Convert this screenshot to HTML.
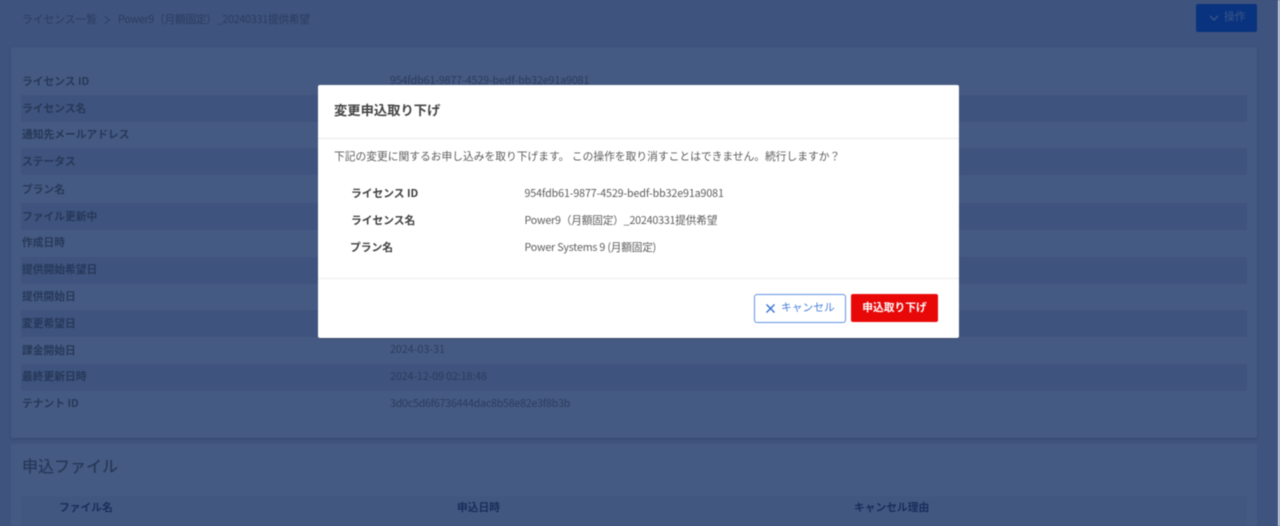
<!DOCTYPE html>
<html lang="ja"><head><meta charset="utf-8"><title>変更申込取り下げ</title>
<style>
*{box-sizing:border-box}
html,body{margin:0;padding:0;width:1280px;height:526px;overflow:hidden}
body{background:#3e537d;font-family:"Noto Sans CJK JP","Liberation Sans",sans-serif;position:relative}
#w{position:absolute;left:0;top:0;width:1280px;height:526px;filter:blur(.4px);background:#3e537d}
.a{position:absolute;white-space:nowrap;line-height:16px}
.card{position:absolute;background:#455a82;left:11px;width:1246px;border-radius:2px}
.st{position:absolute;left:21px;width:1226px;height:27px;background:#3e537d}
.l{position:absolute;left:22px;font-size:10.75px;font-weight:700;color:#263859;white-space:nowrap;line-height:16px}
.v{position:absolute;left:390px;font-size:10.7px;color:#2a3c60;white-space:nowrap;line-height:16px}
.th{position:absolute;top:500px;font-size:10.75px;font-weight:700;color:#172e5a;line-height:16px;white-space:nowrap}
.modal{position:absolute;left:318px;top:85px;width:641px;height:253px;background:#fff;border-radius:2px;box-shadow:0 1px 1px rgba(0,0,0,.2)}
.ml{position:absolute;font-size:10.75px;font-weight:700;color:#3d3d3d;white-space:nowrap;line-height:16px}
.mv{position:absolute;left:206.5px;font-size:10.7px;color:#5c5c5c;white-space:nowrap;line-height:16px}
</style></head><body><div id="w">
<div class="a" style="left:22px;top:12px;font-size:10.75px;color:#2a3c60">ライセンス一覧</div>
<svg class="a" style="left:103px;top:15px" width="8" height="10" viewBox="0 0 8 10"><path d="M1.5 1l5 4-5 4" fill="none" stroke="#2c4270" stroke-width="1"/></svg>
<div class="a" style="left:118px;top:12px;font-size:10.7px;letter-spacing:-.24px;color:#2a3c60">Power9（月額固定）_20240331提供希望</div>
<div class="a" style="left:1196px;top:4px;width:61px;height:28px;background:#0a337f;border-radius:2px"></div>
<svg class="a" style="left:1209px;top:14px" width="10" height="8" viewBox="0 0 10 8"><path d="M1 2l4 4 4-4" fill="none" stroke="#3a5688" stroke-width="1.3"/></svg>
<div class="a" style="left:1224px;top:9px;font-size:10.75px;color:#3a5688">操作</div>
<div class="card" style="top:47px;height:391px;box-shadow:0 1px 2px #34486f"></div>
<div class="card" style="top:444px;height:82px"></div>
<div class="st" style="top:95px"></div><div class="st" style="top:148px"></div><div class="st" style="top:203px"></div><div class="st" style="top:257px"></div><div class="st" style="top:310px"></div><div class="st" style="top:364px"></div>
<div class="l" style="top:74px">ライセンス ID</div>
<div class="l" style="top:101px">ライセンス名</div>
<div class="l" style="top:127px">通知先メールアドレス</div>
<div class="l" style="top:154px">ステータス</div>
<div class="l" style="top:182px">プラン名</div>
<div class="l" style="top:209px">ファイル更新中</div>
<div class="l" style="top:235px">作成日時</div>
<div class="l" style="top:262px">提供開始希望日</div>
<div class="l" style="top:289px">提供開始日</div>
<div class="l" style="top:316px">変更希望日</div>
<div class="l" style="top:343px">課金開始日</div>
<div class="l" style="top:369px">最終更新日時</div>
<div class="l" style="top:396px">テナント ID</div>
<div class="v" style="top:73px;letter-spacing:-.12px">954fdb61-9877-4529-bedf-bb32e91a9081</div>
<div class="v" style="top:342px">2024-03-31</div>
<div class="v" style="top:369px;letter-spacing:-.1px">2024-12-09 02:18:48</div>
<div class="v" style="top:396px;letter-spacing:-.25px">3d0c5d6f6736444dac8b58e82e3f8b3b</div>
<div class="a" style="left:22px;top:454px;font-size:16px;font-weight:500;line-height:22px;color:#263859">申込ファイル</div>
<div class="a" style="left:21px;top:496px;width:1226px;height:30px;background:#425780"></div>
<div class="th" style="left:59px">ファイル名</div>
<div class="th" style="left:457px">申込日時</div>
<div class="th" style="left:854px">キャンセル理由</div>
<div class="a" style="left:1278px;top:0;width:2px;height:526px;background:#c9d2e2"></div>
<div class="modal">
<div class="a" style="left:16px;top:16px;font-size:13.3px;font-weight:700;color:#444;line-height:18px">変更申込取り下げ</div>
<div class="a" style="left:0;top:53px;width:641px;height:1px;background:#e9e9e9"></div>
<div class="a" style="left:16px;top:64px;font-size:10.75px;color:#5c5c5c">下記の変更に関するお申し込みを取り下げます。 この操作を取り消すことはできません。続行しますか？</div>
<div class="ml" style="left:33px;top:101px">ライセンス ID</div>
<div class="ml" style="left:33px;top:128px">ライセンス名</div>
<div class="ml" style="left:32px;top:155px">プラン名</div>
<div class="mv" style="top:101px;letter-spacing:-.12px">954fdb61-9877-4529-bedf-bb32e91a9081</div>
<div class="mv" style="top:128px;letter-spacing:-.2px">Power9（月額固定）_20240331提供希望</div>
<div class="mv" style="top:155px;letter-spacing:-.2px">Power Systems 9 (月額固定)</div>
<div class="a" style="left:0;top:193px;width:641px;height:1px;background:#ededed"></div>
<div class="a" style="left:436px;top:209px;width:92px;height:29px;background:#fff;border:1px solid #5f94e4;border-radius:3px"></div>
<svg class="a" style="left:448px;top:219px" width="9" height="9" viewBox="0 0 9 9"><path d="M.5.5l8 8M8.5.5l-8 8" fill="none" stroke="#2f6cd4" stroke-width="1.3"/></svg>
<div class="a" style="left:463px;top:215px;font-size:10.75px;color:#4a80da">キャンセル</div>
<div class="a" style="left:533px;top:209px;width:87px;height:28px;background:#e80808;border-radius:2px;color:#fff;font-size:10.75px;font-weight:700;text-align:center;line-height:28px">申込取り下げ</div>
</div>
</div></body></html>
